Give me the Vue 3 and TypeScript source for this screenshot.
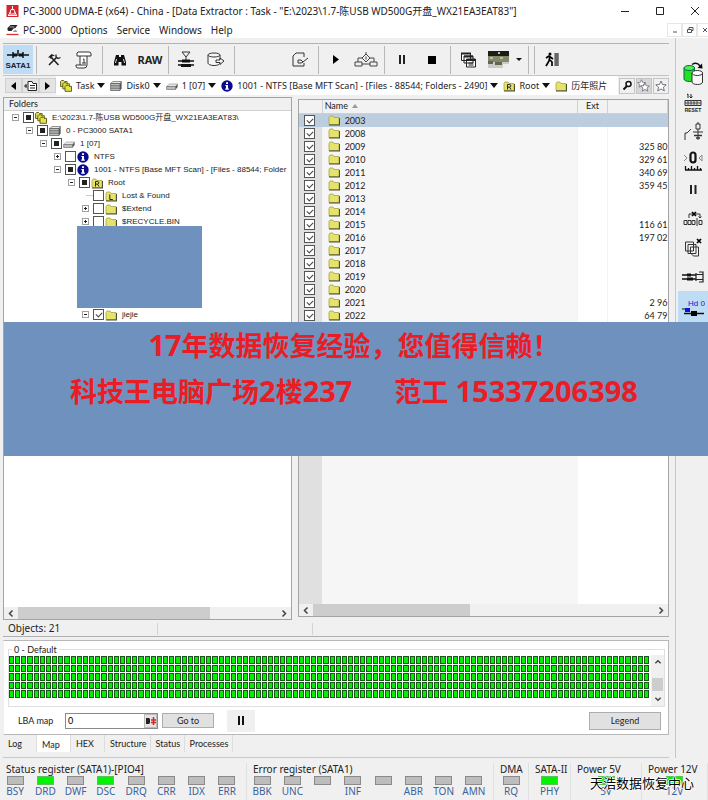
<script setup lang="ts">
import { ref } from 'vue'

interface TreeNode {
  level: number
  label: string
  icon: string
  state: 'partial' | 'checked' | 'empty'
  toggle: '+' | '-' | ''
}
interface FileRow { name: string; size: string }
interface Led { label: string; on?: boolean }
interface Register { title: string; leds: Led[] }

const menus = ['PC-3000', 'Options', 'Service', 'Windows', 'Help']

const tree: TreeNode[] = [
  { level: 0, label: 'E:\\2023\\1.7-陈USB WD500G开盘_WX21EA3EAT83\\', icon: 'task', state: 'partial', toggle: '-' },
  { level: 1, label: '0 - PC3000 SATA1', icon: 'disk', state: 'partial', toggle: '-' },
  { level: 2, label: '1 [07]', icon: 'drive', state: 'partial', toggle: '-' },
  { level: 3, label: 'NTFS', icon: 'info', state: 'empty', toggle: '+' },
  { level: 3, label: '1001 - NTFS [Base MFT Scan] - [Files - 88544; Folder', icon: 'info', state: 'partial', toggle: '-' },
  { level: 4, label: 'Root', icon: 'folder-r', state: 'partial', toggle: '-' },
  { level: 5, label: 'Lost & Found', icon: 'folder-l', state: 'empty', toggle: '' },
  { level: 5, label: '$Extend', icon: 'folder', state: 'empty', toggle: '+' },
  { level: 5, label: '$RECYCLE.BIN', icon: 'folder', state: 'empty', toggle: '+' },
]
const lastNode: TreeNode = { level: 5, label: 'jiejie', icon: 'folder', state: 'checked', toggle: '-' }

const files: FileRow[] = [
  { name: '2003', size: '' },
  { name: '2008', size: '' },
  { name: '2009', size: '325 80' },
  { name: '2010', size: '329 61' },
  { name: '2011', size: '340 69' },
  { name: '2012', size: '359 45' },
  { name: '2013', size: '' },
  { name: '2014', size: '' },
  { name: '2015', size: '116 61' },
  { name: '2016', size: '197 02' },
  { name: '2017', size: '' },
  { name: '2018', size: '' },
  { name: '2019', size: '' },
  { name: '2020', size: '' },
  { name: '2021', size: '2 96' },
  { name: '2022', size: '64 79' },
]

const crumbs = [
  { label: 'Task', icon: 'task', more: true },
  { label: 'Disk0', icon: 'disk', more: true },
  { label: '1 [07]', icon: 'drive', more: true },
  { label: '1001 - NTFS [Base MFT Scan] - [Files - 88544; Folders - 2490]', icon: 'info', more: true },
  { label: 'Root', icon: 'folder-r', more: true },
  { label: '历年照片', icon: 'folder', more: false },
]

const registers: Register[] = [
  {
    title: 'Status register (SATA1)-[PIO4]',
    leds: [{ label: 'BSY' }, { label: 'DRD', on: true }, { label: 'DWF' }, { label: 'DSC', on: true }, { label: 'DRQ' }, { label: 'CRR' }, { label: 'IDX' }, { label: 'ERR' }],
  },
  {
    title: 'Error register (SATA1)',
    leds: [{ label: 'BBK' }, { label: 'UNC' }, { label: '' }, { label: 'INF' }, { label: '' }, { label: 'ABR' }, { label: 'TON' }, { label: 'AMN' }],
  },
  { title: 'DMA', leds: [{ label: 'RQ' }] },
  { title: 'SATA-II', leds: [{ label: 'PHY', on: true }] },
  { title: 'Power 5V', leds: [{ label: '5V', on: true }] },
  { title: 'Power 12V', leds: [{ label: '12V', on: true }] },
]

const tabs = ['Log', 'Map', 'HEX', 'Structure', 'Status', 'Processes']
const activeTab = ref('Map')
const lba = ref('0')
const cellCount = 104 * 5
</script>

<template>
  <div class="window">
    <svg class="defs" aria-hidden="true">
      <symbol id="folder" viewBox="0 0 12 12">
        <path d="M1 3.5 2 2h3l1 1.5h5v7H1z" fill="#e6e36a" stroke="#a5a348" stroke-width=".8" />
        <path d="M1 11h10.6V4" fill="none" stroke="#4a4a30" stroke-width="1.1" />
      </symbol>
      <symbol id="folder-r" viewBox="0 0 12 12">
        <use href="#folder" />
        <path d="M4.5 9.5v-5H6.5a1.3 1.3 0 0 1 0 2.6h-2M6.5 7.2 8 9.5" fill="none" stroke="#222" />
      </symbol>
      <symbol id="folder-l" viewBox="0 0 12 12">
        <use href="#folder" />
        <path d="M4.8 4.5v5h3" fill="none" stroke="#222" />
      </symbol>
      <symbol id="task" viewBox="0 0 12 12">
        <path d="M.6 6.5v-5l1-1h2l1 1h2.5v5z" fill="#e6e34a" stroke="#555518" stroke-width=".9" />
        <path d="M2.8 8.8v-5l1-1h2l1 1h2.6v5z" fill="#e6e34a" stroke="#555518" stroke-width=".9" />
        <path d="M5 11.3v-5l1-1h2l1 1h2.5v5z" fill="#e6e34a" stroke="#555518" stroke-width=".9" />
      </symbol>
      <symbol id="disk" viewBox="0 0 12 12">
        <path d="M.6 3.5 3 1.5h8.6L10 3.5z" fill="#e4e8e4" stroke="#666" stroke-width=".7" />
        <path d="M.6 3.5H10v7H.6z" fill="#b9bfba" stroke="#555" stroke-width=".7" />
        <path d="m10 3.5 1.6-2v7l-1.6 2z" fill="#555" />
        <path d="M1 5.8h9M1 8.2h9" stroke="#555" stroke-width=".8" />
      </symbol>
      <symbol id="drive" viewBox="0 0 12 12">
        <path d="M.6 6.5 3.5 4h8L9.5 6.5z" fill="#e8e8e8" stroke="#888" stroke-width=".6" />
        <path d="M.6 6.5h9v3h-9z" fill="#bbb" stroke="#666" stroke-width=".6" />
        <path d="m9.6 6.5 2-2.5v3l-2 2.5z" fill="#555" />
      </symbol>
      <symbol id="info" viewBox="0 0 12 12">
        <circle cx="6" cy="6" r="5.7" fill="#0a0a8c" />
        <path d="M5 2.2h2v1.7H5zM4.3 4.9H7v3.6h.9v1.2H4.2V8.5H5V6.1h-.7z" fill="#fff" />
      </symbol>
      <symbol id="star" viewBox="0 0 12 12">
        <path d="m6 1 1.5 3.5 3.7.3-2.8 2.4.9 3.7L6 8.9l-3.3 2 .9-3.7L.8 4.8l3.7-.3z" fill="#fff" stroke="#556" stroke-width=".8" />
      </symbol>
    </svg>

    <header class="titlebar">
      <svg class="app-icon" viewBox="0 0 12 12">
        <rect width="12" height="12" fill="#d8232a" />
        <path d="M6 1v3M4.5 4.5h3L9 9H3zM1.5 10.5h9M2 10l2-3M10 10 8 7" stroke="#fff" fill="none" />
      </svg>
      <h1>PC-3000 UDMA-E (x64) - China - [Data Extractor : Task - "E:\2023\1.7-陈USB WD500G开盘_WX21EA3EAT83"]</h1>
      <div class="win-buttons">
        <button aria-label="Minimize"><svg viewBox="0 0 10 10"><path d="M1 5.5h8" /></svg></button>
        <button aria-label="Maximize"><svg viewBox="0 0 10 10"><path d="M1.5 1.5h7v7h-7z" /></svg></button>
        <button aria-label="Close"><svg viewBox="0 0 10 10"><path d="m1 1 8 8M9 1 1 9" /></svg></button>
      </div>
    </header>

    <nav class="menubar" aria-label="Main menu">
      <svg class="app-icon" viewBox="0 0 12 12">
        <path d="M1 4 4 1h7L9 4l-2 .5L5 7H2L1 6z" fill="#222" />
        <path d="M3 3h5" stroke="#aaa" />
        <path d="M6 8 9 5.5 11 8z" fill="#999" />
        <path d="M0 10.500h12" stroke="#d33" stroke-width="1.300" />
      </svg>
      <button v-for="m in menus" :key="m">{{ m }}</button>
      <div class="mdi-buttons">
        <button aria-label="Minimize document"><svg viewBox="0 0 8 8"><path d="M2 6h4" /></svg></button>
        <button aria-label="Restore document"><svg viewBox="0 0 8 8"><path d="M1.5 3.5h4v3h-4zM3 3V1.5h4v3H6" /></svg></button>
        <button aria-label="Close document"><svg viewBox="0 0 8 8"><path d="m2 2 4 4M6 2 2 6" /></svg></button>
      </div>
    </nav>

    <div class="body">
      <main class="content">
        <div class="toolbar">
          <button class="sata" aria-label="SATA1">
            <svg width="22" height="10" viewBox="0 0 22 10"><path d="M0 5h22M6 2v6M16 2v6M11 0v4" stroke="#111" stroke-width="1.5" /><path d="M6 3.5h4v3H6zM12 3.5h4v3h-4z" fill="#111" /></svg>
            <span>SATA1</span>
          </button>
          <i class="sep"></i>
          <button aria-label="Tools">
            <svg width="14" height="14" viewBox="0 0 14 14"><path d="m2 12 8-8M4 4l7.5 8" stroke="#222" stroke-width="1.6" /><path d="M1 4.5 4.5 1 8 2.5 5 3.5 4 6 2.5 4.5z" fill="#222" /><path d="M9 1.5V4l2 1.5 2.5-1" fill="none" stroke="#222" stroke-width="1.3" /></svg>
          </button>
          <button aria-label="Script">
            <svg width="18" height="18" viewBox="0 0 18 18" fill="#fff" stroke="#333"><path d="M3 1h11a2 2 0 0 1 2 2v2h-4v9a3 3 0 0 1-3 3H3a2 2 0 0 1-2-2v-1h4V5H2V2z" /><path d="M5 5h7M8 8h1v4m-2 0h4M5 14h6" fill="none" /></svg>
          </button>
          <i class="sep"></i>
          <button aria-label="Find">
            <svg width="14" height="12" viewBox="0 0 14 12" fill="#111"><path d="M3 1h3v2h2V1h3l2 7v3.5H8.5V8h-3v3.5H1V8z" /><path d="M3.5 5l-1 4M10.5 5l1 4" stroke="#ddd" /></svg>
          </button>
          <button class="raw">RAW</button>
          <i class="sep"></i>
          <button aria-label="Heads">
            <svg width="18" height="18" viewBox="0 0 18 18"><path d="M5 1h8L9 6zM9 6v3" fill="none" stroke="#333" /><path d="M1 10h16M1 14h16" stroke="#111" stroke-width="1.5" /><path d="M5 8.5h8v3H5zM4 13h10v3H4z" fill="#111" /></svg>
          </button>
          <button aria-label="Export drive">
            <svg width="18" height="15" viewBox="0 0 18 15" fill="#f6f6f6" stroke="#333"><path d="M1 3v8c0 1.5 3 2.5 6 2.5s6-1 6-2.5V3" /><ellipse cx="7" cy="3" rx="6" ry="2" /><path d="M9 8h4V6l4 3-4 3.5v-2H9z" /></svg>
          </button>
          <i class="sep"></i>
          <i class="spacer"></i>
          <button aria-label="Save document">
            <svg width="17" height="15" viewBox="0 0 17 15" fill="none" stroke="#333"><path d="M12 5V1H4L1 4v10h11v-3" /><path d="M6 8h3l2 2 5-4M6 8v3h3l2-1" /></svg>
          </button>
          <i class="sep"></i>
          <button aria-label="Run"><svg width="6" height="9" viewBox="0 0 6 9"><path d="M0 0v9l6-4.5z" fill="#000" /></svg></button>
          <button aria-label="Flow chart">
            <svg width="24" height="17" viewBox="0 0 24 17" fill="none" stroke="#444"><path d="M12 1v2M12 3l4 4-4 4-4-4zM8 7H4v4M16 7h4v4M1 11h7v4H1zM16 11h7v4h-7zM8 13h8M12 5.5v3" /></svg>
          </button>
          <i class="sep"></i>
          <button aria-label="Pause"><svg width="6" height="9" viewBox="0 0 6 9"><path d="M0 0h2v9H0zM4 0h2v9H4z" fill="#222" /></svg></button>
          <button aria-label="Stop"><svg width="8" height="8" viewBox="0 0 8 8"><path d="M0 0h8v8H0z" fill="#000" /></svg></button>
          <i class="sep"></i>
          <button aria-label="Cascade">
            <svg width="15" height="16" viewBox="0 0 15 16" fill="#fff" stroke="#222"><path d="M.5 1.5h9v7h-9zM3 4h9v7H3zM5.5 7h9v8h-9z" /><path d="M0 1.5h10M3 4.5h9M5 8h10" stroke-width="2" /><path d="M7.5 11h5M7.5 13h5" /></svg>
          </button>
          <button aria-label="Map picture">
            <svg width="21" height="17" viewBox="0 0 21 17"><path d="M0 0h21v6H0z" fill="#1c1d14" /><path d="M0 5h21v7H0z" fill="#85876a" /><path d="M0 11h21v6H0z" fill="#c9cbc6" /><path d="M10 1h2v2h-2zM2 6h3v2H2zM12 6h3v2h-3z" fill="#bfc0a2" /><path d="M0 10h5v3H0zM7 11h7v3H7z" fill="#62654f" /><path d="M15 13h6v4h-6z" fill="#eee" /></svg>
          </button>
          <button class="caret" aria-label="Map options"><i class="down small"></i></button>
          <i class="sep"></i>
          <i class="sep"></i>
          <button aria-label="Exit">
            <svg width="15" height="15" viewBox="0 0 15 15"><path d="M10 1h4v13h-4z" fill="#888" /><path d="M10 1v13M12 1v13" stroke="#444" /><circle cx="5" cy="2" r="1.5" /><path d="m5 4-1 5-3 5M5 8l2 2v4M1 6l3-2 4 3" stroke="#000" stroke-width="1.7" fill="none" /></svg>
          </button>
        </div>

        <nav class="crumbs" aria-label="Path">
          <button class="nav-btn" aria-label="Back"><svg width="5" height="8" viewBox="0 0 5 8"><path d="M5 0v8L0 4z" /></svg></button>
          <button class="nav-btn" aria-label="Up">
            <svg width="13" height="12" viewBox="0 0 13 12"><path d="M0 6h3M2 4v4" stroke="#222" /><path d="M4 1.5h4l1 2h3.5v7H4z" fill="#fff" stroke="#222" /><path d="M6 5.5h5M6 8h5" stroke="#222" /></svg>
          </button>
          <button class="nav-btn" aria-label="Forward"><svg width="5" height="8" viewBox="0 0 5 8"><path d="M0 0v8l5-4z" /></svg></button>
          <div class="path">
            <button v-for="c in crumbs" :key="c.label" class="crumb">
              <svg class="icon"><use :href="'#' + c.icon" /></svg>
              <span>{{ c.label }}</span>
              <i v-if="c.more" class="down"></i>
            </button>
          </div>
          <button class="nav-btn tool" aria-label="Search"><svg width="11" height="11" viewBox="0 0 11 11"><circle cx="6.5" cy="4" r="2.5" fill="#fff" stroke="#111" stroke-width="1.5" /><path d="M5 6 1.5 9.5" stroke="#111" stroke-width="2" /></svg></button>
          <button class="nav-btn tool dim" aria-label="Favourites"><svg width="14" height="14" viewBox="0 0 14 14"><use href="#star" width="9" height="9" /><use href="#star" x="3" y="3" width="10" height="10" /></svg></button>
          <button class="nav-btn tool" aria-label="Add favourite"><svg width="12" height="12"><use href="#star" /></svg></button>
        </nav>

        <div class="panels">
          <section class="tree-panel">
            <h2>Folders</h2>
            <ul class="tree">
              <li v-for="n in tree" :key="n.label" :style="{ paddingLeft: 7 + n.level * 14 + 'px' }">
                <button v-if="n.toggle" class="toggle" :class="{ plus: n.toggle === '+' }" :aria-label="'Toggle ' + n.label"></button>
                <i v-else class="toggle-gap"></i>
                <label>
                  <input type="checkbox" :class="n.state" :checked="n.state === 'checked'" />
                  <svg class="icon"><use :href="'#' + n.icon" /></svg>
                  <span>{{ n.label }}</span>
                </label>
              </li>
              <li class="cover"></li>
              <li :style="{ paddingLeft: 7 + lastNode.level * 14 + 'px' }">
                <button class="toggle" aria-label="Toggle jiejie"></button>
                <label>
                  <input type="checkbox" class="checked" checked />
                  <svg class="icon"><use href="#folder" /></svg>
                  <span>{{ lastNode.label }}</span>
                </label>
              </li>
            </ul>
            <div class="hscroll left">
              <svg viewBox="0 0 6 6"><path d="M4 1 2 3l2 2" /></svg>
              <div class="track"><div class="thumb"></div></div>
              <svg viewBox="0 0 6 6"><path d="m2 1 2 2-2 2" /></svg>
            </div>
          </section>

          <section class="file-panel">
            <table>
              <colgroup><col class="c-check" /><col /><col class="c-ext" /><col class="c-size" /></colgroup>
              <thead>
                <tr><th></th><th>Name <i class="up"></i></th><th class="ext">Ext</th><th></th></tr>
              </thead>
              <tbody>
                <tr v-for="(f, i) in files" :key="f.name" :class="{ selected: i === 0 }">
                  <td class="check"><input type="checkbox" class="checked" checked :aria-label="'Select ' + f.name" /></td>
                  <td class="name"><span><svg class="icon"><use href="#folder" /></svg>{{ f.name }}</span></td>
                  <td></td>
                  <td class="size">{{ f.size }}</td>
                </tr>
              </tbody>
            </table>
            <div class="filler"><i></i><i></i></div>
            <div class="hscroll right">
              <svg viewBox="0 0 6 6"><path d="M4 1 2 3l2 2" /></svg>
              <div class="track"><div class="thumb"></div></div>
              <svg viewBox="0 0 6 6"><path d="m2 1 2 2-2 2" /></svg>
            </div>
          </section>
        </div>

        <div class="objects"><span>Objects: 21</span><i></i><i></i></div>

        <section class="map-panel">
          <fieldset>
            <legend>0 - Default</legend>
            <div class="cells"><i v-for="n in cellCount" :key="n"></i></div>
            <div class="vscroll">
              <svg viewBox="0 0 6 6"><path d="m1 4 2-2 2 2" /></svg>
              <div class="vthumb"></div>
              <svg viewBox="0 0 6 6"><path d="m1 2 2 2 2-2" /></svg>
            </div>
          </fieldset>
          <div class="lba">
            <label for="lba">LBA map</label>
            <div class="field">
              <input id="lba" v-model="lba" type="text" />
              <button aria-label="Number format"><svg width="10" height="8" viewBox="0 0 10 8"><path d="M0 1h3l1 1v4L3 7H0z" fill="#222" /><path d="M7.500 0v8M5 3h5M5 5.500h5" stroke="#d22" stroke-width="1.500" /></svg></button>
            </div>
            <button class="btn">Go to</button>
            <button class="pause" aria-label="Pause map"><svg width="7" height="9" viewBox="0 0 7 9"><path d="M0 0h2v9H0zM4 0h2v9H4z" fill="#111" /></svg></button>
            <button class="btn legend">Legend</button>
          </div>
        </section>

        <div class="tabs" role="tablist">
          <button v-for="t in tabs" :key="t" role="tab" :aria-selected="t === activeTab" :class="{ active: t === activeTab }" @click="activeTab = t">{{ t }}</button>
        </div>
      </main>

      <aside class="side">
        <button aria-label="Copy data">
          <svg width="21" height="24" viewBox="0 0 21 24"><path d="M1 6v11c0 1.5 2.500 2.500 5.500 2.500s5-1 5-2.500V6" fill="#22e022" stroke="#064" /><ellipse cx="6.3" cy="6" rx="5.3" ry="2.5" fill="#4ff04f" stroke="#064" /><path d="M9 11v9c0 1.500 2.500 2.500 5.500 2.500s5-1 5-2.500v-9" fill="#f8f8f8" stroke="#333" /><ellipse cx="14.3" cy="11" rx="5.3" ry="2.5" fill="#fff" stroke="#333" /><path d="M9 2.500c3-2 6-1.500 8 1.500" fill="none" stroke="#111" stroke-width="1.5" /><path d="m14.500 6 5 .5-.5-5z" /></svg>
        </button>
        <button aria-label="Reset">
          <svg width="18" height="14" viewBox="0 0 18 14"><path d="M3 1.5 4 1v4M7 1v4M5.500 3.500 7 5l1.500-1.500" fill="none" stroke="#222" /><path d="M1 7.500h16v5H1z" fill="#ddd" stroke="#333" /><path d="M1 10h16M4 7v6M7 7v6M10 7v6M13 7v6" stroke="#444" stroke-width=".9" /></svg>
          <span class="tiny">RESET</span>
        </button>
        <button aria-label="Power switch">
          <svg width="19" height="19" viewBox="0 0 19 19" fill="none" stroke="#333"><path d="M1 18v-7h2l4-4M14 7v11M14 0v2M9 10h10" /><path d="M10 13.5h8M12 16h4" stroke-width="1.5" /><path d="M12 2h4v5h-4z" fill="#eee" /></svg>
        </button>
        <button aria-label="Zero position">
          <svg width="20" height="20" viewBox="0 0 20 20"><rect x="7.5" y="1.5" width="5" height="10" rx="2.5" fill="none" stroke="#111" stroke-width="2.2" /><path d="m1 4 3 3-3 3M19 4l-3 3 3 3z" fill="none" stroke="#888" /><path d="M2 19h17M2.500 15v4M5.500 17v2M8.500 15v4M11.500 17v2M14.500 15v4M17.500 17v2" stroke="#111" stroke-width="1.3" /></svg>
        </button>
        <button aria-label="Pause device"><svg width="7" height="9" viewBox="0 0 7 9"><path d="M0 0h2v9H0zM4.500 0h2v9h-2z" fill="#222" /></svg></button>
        <button aria-label="Skip sector">
          <svg width="20" height="15" viewBox="0 0 20 15" fill="none" stroke="#333"><path d="M6 7V3h11v4M15.500 5.500 17 7l1.500-1.500M1 9.500h3v4H1zM5 9.500h3v4H5zM9 9.500h3v4H9zM14 7v8M16 9.500h3v4h-3z" /><path d="m9 1 4 4M13 1 9 5" stroke="#000" stroke-width="1.6" /></svg>
        </button>
        <button aria-label="Close copies">
          <svg width="19" height="20" viewBox="0 0 19 20" fill="#f4f4f4" stroke="#333"><path d="M1.500 4h8v9h-8zM4 6.500h8v9H4zM6.500 9h8v9h-5l-3-3z" /><path d="m13 1 4 4M17 1l-4 4" stroke="#000" stroke-width="1.7" /></svg>
        </button>
        <button aria-label="Head stack">
          <svg width="22" height="12" viewBox="0 0 22 12"><path d="M0 4h14M0 8h14" stroke="#111" stroke-width="1.7" /><path d="M5 2.500h4v3H5zM5 6.500h6v3H5z" fill="#111" /><path d="M14 3.500h7M14 8.500h7M14 2v8M17 1h4v10h-4" fill="none" stroke="#222" stroke-width="1.2" /></svg>
        </button>
        <button class="active" aria-label="Head 0">
          <span class="hd">Hd 0</span>
          <svg width="22" height="9" viewBox="0 0 22 9"><path d="M0 1h5" stroke="#111" /><path d="M3 0h5v4H3z" fill="#1010e0" /><path d="M2 5.500h20" stroke="#111" stroke-width="1.5" /><path d="M9 3h6v5H9z" /></svg>
        </button>
      </aside>
    </div>

    <footer class="registers">
      <section v-for="r in registers" :key="r.title">
        <h3>{{ r.title }}</h3>
        <div class="leds" :class="{ wide: r.leds.length > 1 }">
          <div v-for="(l, i) in r.leds" :key="i" class="led">
            <i :class="{ on: l.on }"></i>
            <span>{{ l.label }}</span>
          </div>
        </div>
      </section>
    </footer>

    <div class="banner">
      <p><b>17</b>年数据恢复经验，您值得信赖！</p>
      <p class="contact"><span>科技王电脑广场<b>2</b>楼<b>237</b></span><span>范工 <b>15337206398</b></span></p>
    </div>
    <div class="watermark">天浩数据恢复中心</div>
  </div>
</template>

<style>
body {
  background: #f0f0f0;
}
</style>

<style scoped>
.window {
  --ui: 'Noto Sans', 'Noto Sans CJK SC', sans-serif;
  --small: 9px/13px Lato, 'Noto Sans CJK SC', sans-serif;
  position: relative;
  display: flex;
  flex-direction: column;
  min-height: 100vh;
  overflow: hidden;
  box-sizing: border-box;
  background: #f0f0f0;
  color: #222;
  font: 10px/13px var(--ui);
}
.window *, .window *::before { box-sizing: border-box; }
.defs { position: absolute; width: 0; height: 0; }
button { font: inherit; color: inherit; background: none; border: 0; padding: 0; margin: 0; }
h1, h2, h3, p, ul { margin: 0; padding: 0; font: inherit; }
ul { list-style: none; }
i { display: block; font-style: normal; }
svg { flex: none; display: block; }
.icon { width: 12px; height: 12px; }

.titlebar, .menubar { display: flex; align-items: center; background: #fff; padding-left: 6px; }
.titlebar { height: 22px; }
.app-icon { width: 13px; height: 12px; margin-right: 4px; }
h1 { flex: 1; min-width: 0; white-space: nowrap; overflow: hidden; }
.win-buttons { display: flex; margin-right: -4px; }
.win-buttons button { width: 35px; height: 22px; display: grid; place-items: center; }
.win-buttons svg { width: 10px; height: 10px; fill: none; stroke: #222; }
.menubar { height: 16px; }
.menubar > button { margin-right: 9px; }
.mdi-buttons { margin-left: auto; margin-right: -4px; display: flex; }
.mdi-buttons button { width: 15px; height: 14px; display: grid; place-items: center; border: 1px solid #e6e6e6; }
.mdi-buttons svg { width: 8px; height: 8px; fill: none; stroke: #456; }

.body { flex: 1; display: flex; min-height: 0; }
.content { flex: 1; min-width: 0; display: flex; flex-direction: column; padding: 5px 6px 0 3px; border-right: 1px solid #c8c8c8; margin-right: 2px; }
.toolbar { display: flex; align-items: center; height: 32px; border-top: 1px solid #b4b4b4; }
.toolbar button { width: 30px; height: 29px; display: flex; flex-direction: column; align-items: center; justify-content: center; }
.toolbar .sata { background: #bfdcf5; gap: 1px; font: bold 8px/9px 'Liberation Sans', sans-serif; }
.toolbar .raw { font: bold 11px/13px var(--ui); }
.toolbar .caret { width: 12px; }
.sep { width: 3px; height: 28px; margin-left: 3px; border-left: 1px solid #b8b8b8; }
.spacer { width: 48px; }
.down { width: 0; height: 0; border: 4px solid transparent; border-top: 5px solid #111; border-bottom: 0; }
.down.small { border-width: 3px 3px 0; }
.up { display: inline-block; border: 3px solid transparent; border-bottom: 4px solid #999; border-top: 0; margin-left: 2px; vertical-align: 1px; }

.crumbs { display: flex; align-items: center; height: 22px; padding: 0 0 2px 2px; border-top: 1px solid #c4c4c4; }
.nav-btn { width: 17px; height: 15px; display: grid; place-items: center; background: #e4e4e4; border: 1px solid #d0d0d0; }
.nav-btn.tool { width: 16px; height: 16px; margin-left: 1px; background: #f0f0f0; border-color: #c4c4c4; }
.nav-btn.dim { background: #d6d6d6; }
.path { flex: 1; min-width: 0; display: flex; gap: 5px; height: 19px; padding-left: 4px; background: #fff; overflow: hidden; white-space: nowrap; }
.crumb { display: flex; align-items: center; gap: 4px; font-size: 9px; }
.crumb .down { margin-left: -1px; }

.panels { flex: 1; display: flex; gap: 6px; min-height: 0; font: var(--small); }
.tree-panel, .file-panel { display: flex; flex-direction: column; border: 1px solid #a4a4a4; background: #fff; min-width: 0; overflow: hidden; }
.tree-panel { flex: 288 1 0; }
.file-panel { flex: 370 1 0; margin: 2px 0 3px; }
h2 { height: 13px; padding-left: 5px; background: #f0f0f0; border-bottom: 1px solid #d0d0d0; line-height: 12px; }
.tree { flex: 1; overflow: hidden; font: 8px/13px 'Liberation Sans', 'Noto Sans CJK SC', sans-serif; }
.tree li { display: flex; align-items: center; height: 13px; white-space: nowrap; }
.tree li.cover { height: 82px; width: 125px; margin: -2px 0 0 73px; background: #6f91bd; position: relative; }
.toggle { position: relative; width: 7px; height: 7px; margin: 0 4px 0 1px; border: 1px solid #a0a0a0; background: #fff; flex: none; }
.toggle::before { content: ''; display: block; width: 3px; height: 1px; margin: 2px 1px; background: #222; }
.toggle.plus { background: linear-gradient(#222, #222) center / 1px 3px no-repeat #fff; }
.toggle-gap { width: 12px; height: 1px; flex: none; background: linear-gradient(90deg, transparent 5px, #ccc 5px); }
.tree label { display: flex; align-items: center; gap: 1px; }
.tree label span { margin-left: 4px; }
input[type='checkbox'] { appearance: none; width: 11px; height: 11px; margin: 0; border: 1px solid #555; background: #fff; flex: none; display: grid; place-items: center; }
input.partial::before { content: ''; width: 5px; height: 5px; background: #222; }
input.checked::before { content: ''; width: 6px; height: 4px; border: solid #444; border-width: 0 0 1px 1px; transform: rotate(-45deg); margin-top: -1px; }

.hscroll { display: flex; align-items: center; height: 12px; background: #f0f0f0; }
.hscroll svg { width: 14px; height: 9px; }
.hscroll svg, .vscroll svg { fill: none; stroke: #444; }
.track { flex: 1; height: 12px; }
.thumb { height: 12px; background: #cdcdcd; }
.left .thumb { width: 74%; }
.right .thumb { width: 46%; }

table { width: 100%; table-layout: fixed; border-collapse: collapse; }
.c-check { width: 23px; }
.c-ext { width: 30px; }
.c-size { width: 60px; }
th, td { padding: 0; height: 13px; text-align: left; font-weight: 400; white-space: nowrap; overflow: hidden; }
th { background: #f2f2f2; border-right: 1px solid #d0d0d0; border-bottom: 1px solid #d0d0d0; padding-left: 2px; line-height: 12px; }
th.ext { padding-left: 8px; }
td { border-right: 1px solid #f3f3f3; }
td.check { background: #e0e0e0; padding-left: 5px; }
td.name { background: #f6f6f6; padding-left: 5px; }
td.name span { display: flex; align-items: center; gap: 5px; }
td.size { text-align: right; border: 0; }
.selected td, .selected td.name { background: #bccde0; border-color: #bccde0; }
.filler { flex: 1; display: grid; grid-template-columns: 23px 1fr 90px; }
.filler i:first-child { background: #e0e0e0; }
.filler i:last-child { background: #f6f6f6; }

.objects { display: grid; grid-template-columns: 149px 155px 1fr; height: 17px; align-items: center; border-bottom: 1px solid #b0b0b0; padding: 1px 0 0 5px; }
.objects i { height: 12px; border-left: 1px solid #d4d4d4; }
.map-panel { margin-top: 3px; padding: 3px 3px 0 4px; background: #fff; border: 1px solid #b8b8b8; border-left-color: #f0f0f0; font: var(--small); }
fieldset { display: flex; margin: 0; padding: 0; border: 1px solid #e0e0e0; min-width: 0; }
legend { padding: 0 2px; margin-left: 3px; line-height: 11px; }
.cells { flex: 1; display: grid; grid-template-columns: repeat(104, 1fr); grid-template-rows: repeat(5, 1fr); height: 43px; margin: 1px 0 7px; }
.cells i { background: #00f000; border: 1px solid #1b551b; margin: 0 1px 1px 0; }
.vscroll { width: 13px; display: flex; flex-direction: column; align-items: center; justify-content: space-between; background: #f0f0f0; padding: 3px 0; margin-left: 1px; }
.vscroll svg { width: 8px; height: 8px; }
.vthumb { width: 11px; height: 13px; margin-top: 7px; background: #cdcdcd; }
.lba { display: flex; align-items: center; height: 27px; padding: 0 4px 0 10px; }
.lba label { width: 34px; white-space: nowrap; }
.field { display: flex; width: 93px; height: 16px; margin-left: 13px; border: 1px solid #8a8a8a; background: #fff; }
.field input { flex: 1; min-width: 0; border: 0; padding: 0 2px; font: inherit; background: none; }
.field button { width: 13px; display: grid; place-items: center; background: #e4e4e4; border: 1px solid #bbb; }
.btn { width: 52px; height: 15px; margin-left: 4px; background: #e1e1e1; border: 1px solid #adadad; }
.pause { width: 28px; height: 22px; margin-left: 13px; display: grid; place-items: center; background: #f0f0f0; }
.btn.legend { width: 72px; height: 18px; margin-left: auto; }
.tabs { display: flex; height: 23px; padding-bottom: 5px; border-bottom: 1px solid #c8c8c8; font: var(--small); }
.tabs button { min-width: 34px; padding: 0 3px 0 5px; border-right: 1px solid #ddd; text-align: left; }
.tabs .active { background: #fff; padding-top: 2px; }

.side { width: 30px; display: flex; flex-direction: column; padding-top: 21px; flex: none; }
.side button { height: 29px; display: flex; flex-direction: column; align-items: center; justify-content: center; }
.side .active { background: #bfdcf5; height: 34px; }
.tiny { font: bold 5px/6px 'Liberation Sans', sans-serif; }
.hd { font: 8px/9px 'Liberation Sans', sans-serif; color: #1414e0; align-self: flex-end; padding-right: 3px; }

.registers { display: grid; grid-template-columns: 247fr 247fr 35fr 42fr 71fr 66fr; height: 37px; margin-top: 5px; }
.registers section { min-width: 0; border-right: 1px solid #e0e0e0; }
h3 { padding-left: 6px; white-space: nowrap; }
.leds { display: flex; }
.leds.wide { padding-right: 4px; }
.led { flex: 1; display: flex; flex-direction: column; align-items: center; color: #3d629a; line-height: 13px; }
.led i { width: 17px; height: 9px; background: #bdbdbd; border: 1px solid #8a8a8a; }
.led i.on { background: #00f400; border-color: #5cc05c; }

.banner { position: absolute; left: 4px; right: 0; top: 322px; height: 134px; padding-right: 4px; background: #6f91bd; color: #ea1c24; font: bold 27px/45px 'Noto Sans', 'Noto Sans CJK SC', sans-serif; text-align: center; white-space: nowrap; }
.banner b { font-size: 29px; font-weight: 700; }
.contact { display: flex; justify-content: center; gap: 42px; }
.watermark { position: absolute; right: 14px; bottom: 8px; font: 13px/18px 'Noto Sans CJK SC', sans-serif; color: #000; text-shadow: 1px 0 #fff, -1px 0 #fff, 0 1px #fff, 0 -1px #fff; }
</style>
